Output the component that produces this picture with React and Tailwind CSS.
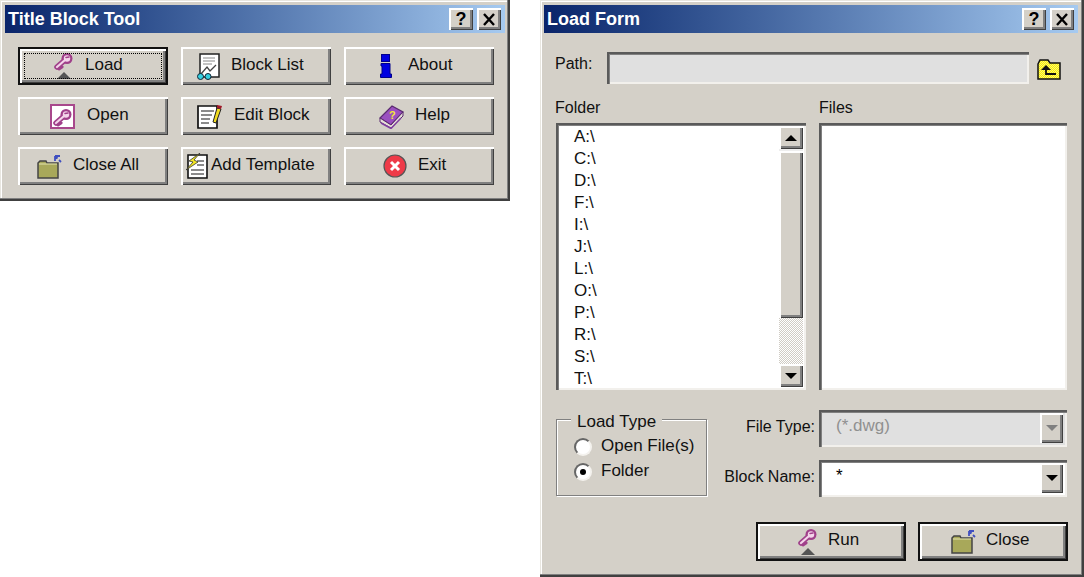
import React from "react";

const raised =
  "shadow-[inset_2px_2px_0_#fff,inset_-1px_-1px_0_#404040,inset_-3px_-3px_0_#808080]";
const sunken =
  "shadow-[inset_2px_2px_0_#5a5a5a,inset_3px_3px_0_#808080,inset_-2px_-2px_0_#f2f0ec]";
const frame =
  "shadow-[inset_-1px_-1px_0_#404040,inset_-2px_-2px_0_#404040,inset_-3px_-3px_0_#808080,inset_1px_1px_0_#e8e6e0,inset_2px_2px_0_#fff]";

const drives = ["A:\\", "C:\\", "D:\\", "F:\\", "I:\\", "J:\\", "L:\\", "O:\\", "P:\\", "R:\\", "S:\\", "T:\\"];

// icons
function KeyShape() {
  return (
    <g fill="none" strokeLinecap="round">
      <path d="M3 15 L11 8" stroke="#a0408a" strokeWidth="5.500" />
      <path d="M5 17 L8 15" stroke="#a0408a" strokeWidth="3" />
      <circle cx="13" cy="6.500" r="5.500" fill="#a0408a" />
      <path d="M3 15 L11 8" stroke="#f4d4ea" strokeWidth="2.200" />
      <circle cx="13" cy="6.500" r="3.200" fill="#f4d4ea" />
      <path d="M12 5.500 L15 5" stroke="#a0408a" strokeWidth="1.500" />
    </g>
  );
}

function LoadIcon() {
  return (
    <svg width="22" height="28" viewBox="0 0 22 28">
      <KeyShape />
      <path d="M3 27 L10 20 L17 27 Z" fill="#555" />
    </svg>
  );
}

function OpenIcon() {
  return (
    <svg width="25" height="25" viewBox="0 0 25 25">
      <rect x="1" y="1" width="23" height="23" fill="#fff" stroke="#a8488c" strokeWidth="2" />
      <g transform="translate(3 4)">
        <KeyShape />
      </g>
    </svg>
  );
}

function FolderIcon() {
  return (
    <svg width="25" height="25" viewBox="0 0 25 25">
      <path d="M1 9 L3 7 L9 7 L10 9 L21 9 L21 24 L1 24 Z" fill="#a8a85a" stroke="#444" strokeWidth="1.500" />
      <path d="M2 10 L20 10" stroke="#e4e4b0" />
      <path d="M24 8 L22 6 M20.500 4.500 L18 2 M18 2 L18 7 M18 2 L23 2" stroke="#3f4fc0" strokeWidth="1.800" fill="none" />
    </svg>
  );
}

function BlockListIcon() {
  return (
    <svg width="23" height="27" viewBox="0 0 23 27">
      <rect x="3" y="1" width="19" height="23" fill="#fff" stroke="#222" strokeWidth="1.500" />
      <path d="M6 5 L18 5 M6 8 L18 8 M6 11 L15 11" stroke="#888" />
      <path d="M4 21 L10 14 L13 18 L19 12" stroke="#444" fill="none" strokeWidth="1.300" />
      <circle cx="3.500" cy="23.500" r="3" fill="#35d0e0" stroke="#123" />
      <circle cx="11" cy="23.500" r="3" fill="#35d0e0" stroke="#123" />
    </svg>
  );
}

function EditIcon() {
  return (
    <svg width="26" height="25" viewBox="0 0 26 25">
      <path d="M1 2 L20 2 L20 24 L1 24 Z" fill="#fff" stroke="#111" strokeWidth="1.700" />
      <path d="M4 7 L17 7 M4 11 L15 11 M4 15 L13 15 M4 19 L12 19" stroke="#666" strokeWidth="1.300" />
      <path d="M20 4 L24 5 L19 19 L16 18 Z" fill="#f2dc20" stroke="#222" />
      <path d="M20 1 L25 2 L24 5 L20 4 Z" fill="#a01828" />
    </svg>
  );
}

function TemplateIcon() {
  return (
    <svg width="22" height="26" viewBox="0 0 22 26">
      <path d="M2 2 L21 2 L21 25 L2 25 Z" fill="#fff" stroke="#111" strokeWidth="1.600" />
      <path d="M11 8 L18 8 M11 12 L18 12 M5 17 L18 17 M5 21 L18 21" stroke="#666" strokeWidth="1.300" />
      <path d="M14 0 L3 8 L7 9 L0 17 L12 9 L8 7 Z" fill="#f5e820" stroke="#333" strokeWidth="0.800" />
    </svg>
  );
}

function InfoIcon() {
  return (
    <svg width="12" height="24" viewBox="0 0 12 24">
      <rect x="1.500" y="0.500" width="8" height="7" fill="#0000e0" stroke="#00008a" />
      <path d="M1 9.500 L10 9.500 L10 20 L11.500 20 L11.500 23.500 L0.500 23.500 L0.500 20 L2 20 L2 12 L1 12 Z" fill="#0000e0" stroke="#00008a" />
    </svg>
  );
}

function BookIcon() {
  return (
    <svg width="25" height="25" viewBox="0 0 25 25">
      <path d="M1 14 L13 2 L24 8 L12 21 Z" fill="#9a50c0" stroke="#5a2a70" strokeWidth="1.200" />
      <path d="M1 14 L1 18 L12 24 L24 12 L24 8 L12 21 Z" fill="#e6e0d8" stroke="#5a2a70" />
      <path d="M2 19 L12 24.500 L22 14" fill="none" stroke="#8040a0" strokeWidth="1.500" />
      <text x="10" y="15" fontSize="11" fontWeight="700" fill="#f4e838" fontFamily="Liberation Sans, sans-serif">?</text>
    </svg>
  );
}

function ExitIcon() {
  return (
    <svg width="24" height="24" viewBox="0 0 24 24">
      <circle cx="12" cy="12" r="11" fill="#ee3a48" stroke="#555" strokeWidth="1.200" />
      <path d="M8 8 L16 16 M16 8 L8 16" stroke="#fff" strokeWidth="3" />
    </svg>
  );
}

function UpFolderIcon() {
  return (
    <svg width="24" height="21" viewBox="0 0 24 21">
      <defs>
        <pattern id="dither" width="2" height="2" patternUnits="userSpaceOnUse">
          <rect width="2" height="2" fill="#fbf200" />
          <rect width="1" height="1" fill="#f8f27a" />
          <rect x="1" y="1" width="1" height="1" fill="#f8f27a" />
        </pattern>
      </defs>
      <path d="M1 5 L3 1 L11 1 L13 4 L23 4 L23 20 L1 20 Z" fill="url(#dither)" stroke="#111" strokeWidth="1.500" />
      <path d="M9 10 L9 15 L19 15" fill="none" stroke="#111" strokeWidth="1.800" />
      <path d="M4 11 L9 6 L14 11 Z" fill="#111" />
    </svg>
  );
}

function Arrow({ down, gray }) {
  if (!down) {
    return <span className="w-0 h-0 border-x-[6px] border-x-transparent border-b-[6px] border-b-black" />;
  }
  return (
    <span
      className={`w-0 h-0 border-x-[6px] border-x-transparent border-t-[6px] ${
        gray ? "border-t-[#808080]" : "border-t-black"
      }`}
    />
  );
}

function Title({ text }) {
  return (
    <div className="h-[28px] flex items-center justify-between pl-[3px] pr-[4px] bg-gradient-to-r from-[#0a246a] to-[#a6caf0]">
      <span className="text-[18px] font-bold text-white leading-none">{text}</span>
      <div className="flex gap-[4px]">
        <div className={`w-[24px] h-[22px] bg-[#d4d0c8] flex items-center justify-center text-[18px] font-bold text-black ${raised}`}>?</div>
        <div className={`w-[24px] h-[22px] bg-[#d4d0c8] flex items-center justify-center text-[18px] font-bold text-black ${raised}`}>
          <svg width="14" height="13" viewBox="0 0 14 13">
            <path d="M2 1 L12 12 M12 1 L2 12" stroke="#000" strokeWidth="2.400" />
          </svg>
        </div>
      </div>
    </div>
  );
}

function Btn({ icon, label, className, isDefault, focused }) {
  return (
    <div
      className={`relative w-[150px] h-[38px] flex items-center bg-[#d4d0c8] text-[17px] text-[#111] ${raised} ${className} ${
        isDefault ? "border-2 border-[#111]" : ""
      }`}
    >
      {icon}
      <span className="pb-[3px]">{label}</span>
      {focused && <span className="absolute inset-[4px] border border-dotted border-black" />}
    </div>
  );
}

function ScrollBtn({ down }) {
  return (
    <div className={`h-[23px] flex items-center justify-center bg-[#d4d0c8] ${raised}`}>
      <Arrow down={down} />
    </div>
  );
}

function Combo({ label, value, disabled }) {
  return (
    <div className="flex items-center justify-end">
      <span className="text-[16px] text-[#111] mr-[4px] pb-[4px]">{label}</span>
      <div
        className={`w-[248px] h-[37px] flex items-center justify-between pl-[17px] pr-[4px] ${sunken} ${
          disabled ? "bg-[#e0e0e0] text-[#909090]" : "bg-white text-black"
        }`}
      >
        <span className="text-[17px] pb-[6px]">{value}</span>
        <div className={`w-[23px] h-[30px] mb-[1px] flex items-center justify-center bg-[#d4d0c8] ${raised}`}>
          <Arrow down gray={disabled} />
        </div>
      </div>
    </div>
  );
}

function Radio({ label, checked }) {
  return (
    <div className="flex items-center h-[25px] pl-[17px]">
      <span className="w-[18px] h-[18px] rounded-full bg-white border-2 border-t-[#666] border-l-[#666] border-r-[#f4f2ee] border-b-[#f4f2ee] flex items-center justify-center">
        {checked && <span className="w-[6px] h-[6px] rounded-full bg-black" />}
      </span>
      <span className="ml-[9px] text-[17px] text-[#111] pb-[2px]">{label}</span>
    </div>
  );
}

function TitleBlockTool() {
  return (
    <div className={`w-[510px] h-[201px] bg-[#d4d0c8] px-[5px] pt-[5px] ${frame}`}>
      <Title text="Title Block Tool" />
      <div className="grid grid-cols-[150px_150px_150px] gap-x-[13px] gap-y-[12px] pl-[13px] pt-[14px]">
        <Btn isDefault focused label="Load" className="pl-[34px] gap-[9px]" icon={<LoadIcon />} />
        <Btn label="Block List" className="pl-[16px] gap-[11px]" icon={<BlockListIcon />} />
        <Btn label="About" className="pl-[36px] gap-[16px]" icon={<InfoIcon />} />
        <Btn label="Open" className="pl-[32px] gap-[12px]" icon={<OpenIcon />} />
        <Btn label="Edit Block" className="pl-[16px] gap-[11px]" icon={<EditIcon />} />
        <Btn label="Help" className="pl-[35px] gap-[11px]" icon={<BookIcon />} />
        <Btn label="Close All" className="pl-[19px] gap-[11px]" icon={<FolderIcon />} />
        <Btn label="Add Template" className="pl-[5px] gap-[3px]" icon={<TemplateIcon />} />
        <Btn label="Exit" className="pl-[39px] gap-[11px]" icon={<ExitIcon />} />
      </div>
    </div>
  );
}

function LoadForm() {
  return (
    <div className={`w-[544px] h-[577px] bg-[#d4d0c8] pl-[4px] pr-[6px] pt-[5px] ${frame}`}>
      <Title text="Load Form" />
      <div className="pl-[12px]">
        <div className="flex items-center mt-[19px] h-[32px]">
          <span className="-ml-[1px] w-[52px] text-[16px] text-[#111] pb-[8px]">Path:</span>
          <div className={`w-[422px] h-[32px] bg-[#e0e0e0] ${sunken}`} />
          <span className="ml-[8px] mt-[2px]">
            <UpFolderIcon />
          </span>
        </div>

        <div className="grid grid-cols-[250px_248px] gap-x-[13px] mt-[12px]">
          <span className="-ml-[1px] text-[16px] text-[#111] h-[27px]">Folder</span>
          <span className="text-[16px] text-[#111] h-[27px]">Files</span>

          <div className={`h-[267px] flex bg-white p-[3px] ${sunken}`}>
            <div className="flex-1 text-[17px] text-[#111] overflow-hidden pl-[15px] pt-[1px]">
              {drives.map((d) => (
                <div key={d} className="h-[22px] leading-[20px]">
                  {d}
                </div>
              ))}
            </div>
            <div className="w-[24px] flex flex-col">
              <ScrollBtn />
              <div className="h-[2px] bg-[#eeeeee]" />
              <div className={`h-[167px] bg-[#d4d0c8] ${raised}`} />
              <div className="flex-1 bg-[repeating-conic-gradient(#fff_0_25%,#d0ccc4_0_50%)] bg-[length:2px_2px]" />
              <ScrollBtn down />
            </div>
          </div>
          <div className={`h-[267px] bg-white ${sunken}`} />
        </div>

        <div className="flex mt-[20px] w-[511px] justify-between">
          <div className="relative mt-[9px] w-[151px] h-[77px] border border-[#808080] shadow-[1px_1px_0_#fff,inset_1px_1px_0_#fff] pt-[14px]">
            <span className="absolute left-[14px] -top-[11px] px-[6px] bg-[#d4d0c8] text-[17px] text-[#111]">Load Type</span>
            <Radio label="Open File(s)" />
            <Radio label="Folder" checked />
          </div>
          <div className="flex flex-col gap-[13px]">
            <Combo label="File Type:" value="(*.dwg)" disabled />
            <Combo label="Block Name:" value="*" />
          </div>
        </div>

        <div className="flex justify-end gap-[12px] mt-[25px] w-[512px]">
          <Btn isDefault label="Run" className="h-[39px]! pl-[40px] gap-[8px]" icon={<LoadIcon />} />
          <Btn isDefault label="Close" className="h-[39px]! pl-[31px] gap-[10px]" icon={<FolderIcon />} />
        </div>
      </div>
    </div>
  );
}

export default function App() {
  return (
    <div className="w-[1084px] h-[577px] bg-white flex gap-[30px] overflow-hidden font-['Liberation_Sans',Arial,sans-serif]">
      <TitleBlockTool />
      <LoadForm />
    </div>
  );
}
